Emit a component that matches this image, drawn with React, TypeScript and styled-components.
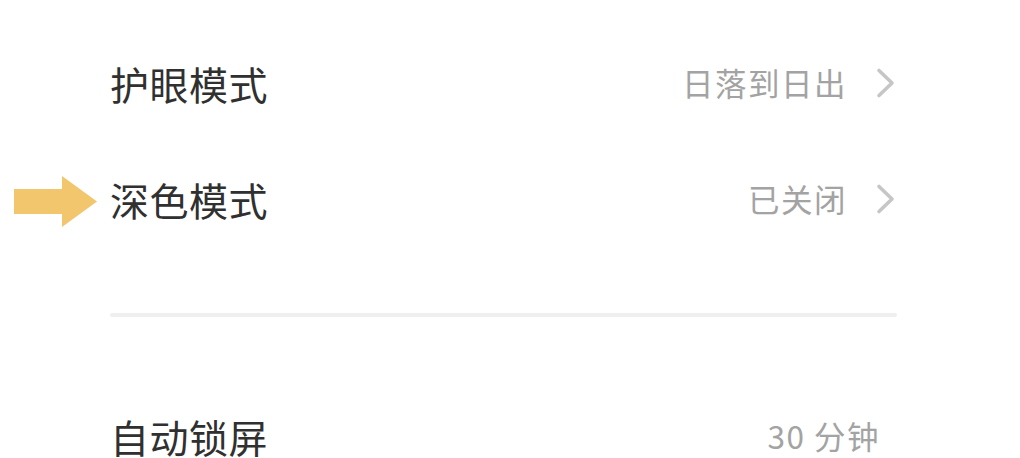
import React from "react";
import styled, { createGlobalStyle } from "styled-components";

const GlobalStyle = createGlobalStyle`
  html, body {
    margin: 0;
    padding: 0;
    background: #ffffff;
  }
  body {
    font-family: "Noto Sans CJK SC", "Noto Sans", sans-serif;
  }
`;

type Item = {
  label: string;
  value: string;
  arrow?: boolean;
  marked?: boolean;
};

const topItems: Item[] = [
  { label: "护眼模式", value: "日落到日出", arrow: true },
  { label: "深色模式", value: "已关闭", arrow: true, marked: true },
];

const bottomItems: Item[] = [{ label: "自动锁屏", value: "30 分钟" }];

const Chevron = () => (
  <svg width="22" height="32" viewBox="0 0 22 32" fill="none">
    <path
      d="M4 3.5 L17 16 L4 28.5"
      stroke="#c6c6c6"
      strokeWidth="3.6"
      strokeLinecap="round"
      strokeLinejoin="round"
    />
  </svg>
);

const Pointer = () => (
  <svg width="84" height="52" viewBox="0 0 84 52">
    <path d="M0 13 H48 V0 L83 25.5 L48 51 V38 H0 Z" fill="#f2c66d" />
  </svg>
);

const SettingRow = ({ label, value, arrow, marked }: Item) => (
  <StyledRow>
    {marked && (
      <StyledMark>
        <Pointer />
      </StyledMark>
    )}
    <StyledLabel>{label}</StyledLabel>
    <StyledRight $arrow={!!arrow}>
      <StyledValue>{value}</StyledValue>
      {arrow && <Chevron />}
    </StyledRight>
  </StyledRow>
);

export default function App() {
  return (
    <>
      <GlobalStyle />
      <StyledPage>
        <StyledGroup>
          {topItems.map((item) => (
            <SettingRow key={item.label} {...item} />
          ))}
        </StyledGroup>
        <StyledDivider />
        <StyledGroup>
          {bottomItems.map((item) => (
            <SettingRow key={item.label} {...item} />
          ))}
        </StyledGroup>
      </StyledPage>
    </>
  );
}

const StyledPage = styled.div`
  width: 1020px;
  height: 458px;
  overflow: hidden;
  box-sizing: border-box;
  padding: 25px 123px 0 110px;
  display: flex;
  flex-direction: column;
`;

const StyledGroup = styled.div`
  display: flex;
  flex-direction: column;
`;

const StyledRow = styled.div`
  position: relative;
  flex: none;
  height: 116px;
  display: flex;
  align-items: center;
  justify-content: space-between;
`;

const StyledMark = styled.div`
  position: absolute;
  left: -96px;
  top: 50%;
  transform: translateY(-44%);
  display: flex;
`;

const StyledLabel = styled.span`
  font-size: 39px;
  line-height: 1;
  color: #303030;
  letter-spacing: 0.5px;
`;

const StyledRight = styled.div<{ $arrow: boolean }>`
  display: flex;
  align-items: center;
  gap: 28px;
  padding-right: ${({ $arrow }) => ($arrow ? "0" : "17px")};
`;

const StyledValue = styled.span`
  font-size: 31.5px;
  line-height: 1;
  color: #a3a3a3;
  letter-spacing: 1.5px;
`;

const StyledDivider = styled.div`
  flex: none;
  height: 4px;
  background: #efefef;
  border-radius: 2px;
  margin: 56px 0 61px;
`;
